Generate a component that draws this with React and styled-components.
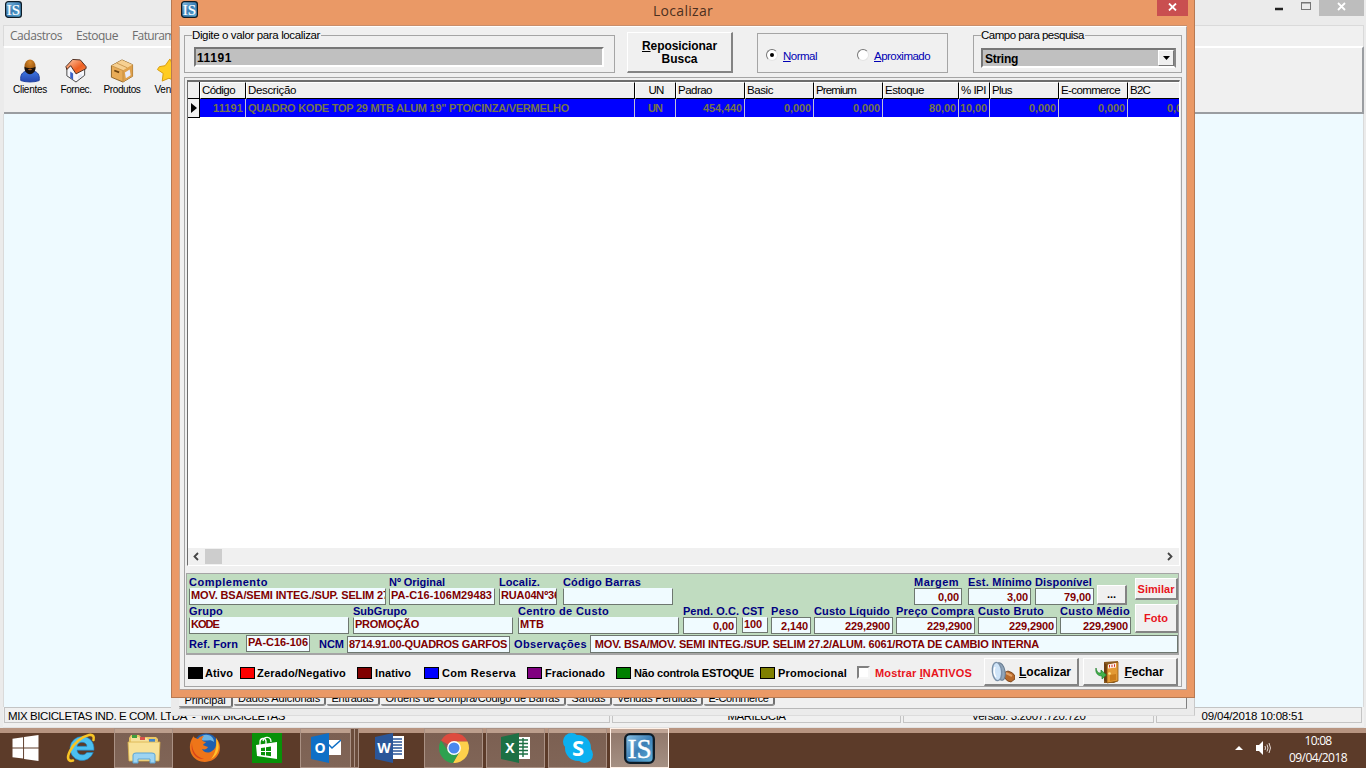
import React, { useLayoutEffect, useRef } from "react";
import styled, { createGlobalStyle } from "styled-components";

const Global = createGlobalStyle`
  * { box-sizing: border-box; }
  body { margin: 0; background: #eaeaea; font-family: "Liberation Sans", Arial, sans-serif; font-size: 11px; color: #000; }
`;

/* ---------- text whose tracking adapts to a given width ---------- */
const TextSpan = styled.span`
  display: inline-block;
  white-space: pre;
  flex: none;
  justify-self: start;
  color: ${(p) => p.$color || "inherit"};
`;
function Text({ w, color, children }) {
  const ref = useRef(null);
  useLayoutEffect(() => {
    const el = ref.current;
    if (!w || !el) return;
    el.style.letterSpacing = "0px";
    const n = el.textContent.length;
    const spacing = (w - el.getBoundingClientRect().width) / n;
    el.style.letterSpacing = spacing.toFixed(3) + "px";
  }, [w]);
  return (
    <TextSpan ref={ref} $color={color}>
      {children}
    </TextSpan>
  );
}

/* ---------- desktop ---------- */
const Desktop = styled.div`
  position: relative;
  width: 1366px;
  height: 768px;
  overflow: hidden;
  display: flex;
  flex-direction: column;
`;
const MainWindow = styled.div`
  height: 728px;
  display: flex;
  flex-direction: column;
  background: #ebebeb;
  padding: 0 2px 0 3px;
`;
const MainTitle = styled.div`
  height: 25px;
  display: flex;
  justify-content: space-between;
  padding-left: 2px;
  & > svg { margin-top: 1px; }
`;
const WindowButtons = styled.div`
  display: flex;
  height: 16px;
`;
const MenuBar = styled.div`
  height: 21px;
  border-top: 1px solid #dadada;
  border-left: 1px solid #dadada;
  border-right: 1px solid #dadada;
  background: #f0f0f0;
  display: flex;
  padding-left: 6px;
  gap: 14px;
  align-items: center;
  font-family: "Open Sans", "Noto Sans", sans-serif;
  font-size: 12px;
  line-height: 18px;
  color: #6d6d6d;
`;
const ToolBar = styled.div`
  height: 68px;
  margin-left: 1px;
  background: #f0f0f0;
  border-top: 2px solid #fff;
  border-right: 2px solid #9a9da1;
  border-bottom: 2px solid #9a9da1;
  display: flex;
  padding: 10px 0 0 3px;
`;
const ToolItem = styled.div`
  width: 46px;
  display: flex;
  flex-direction: column;
  align-items: center;
  flex: none;
  font-size: 10px;
  line-height: 12px;
  gap: 1px;
`;
const Client = styled.div`
  flex: 1;
  background: #eefaff;
  border-left: 1px solid #dadada;
  border-right: 1px solid #dadada;
`;
const StatusBar = styled.div`
  height: 21px;
  background: #f0f0f0;
  display: flex;
  padding: 0 1px 4px 1px;
  gap: 2px;
  border-bottom: 1px solid #e2e2e2;
`;
const StatusCell = styled.div`
  width: ${(p) => p.$w}px;
  flex: none;
  border: 1px solid #c4c4c4;
  display: flex;
  align-items: center;
  font-size: 11.5px;
  line-height: 14px;
  justify-content: ${(p) => (p.$left ? "flex-start" : "center")};
  padding-left: ${(p) => (p.$left ? 3 : 0)}px;
  padding-right: ${(p) => p.$inset || 0}px;
  padding-top: 1px;
`;

/* ---------- child window strip visible below the dialog ---------- */
const ChildWindow = styled.div`
  position: absolute;
  left: 171px;
  top: 690px;
  width: 1024px;
  height: 26px;
  background: #ebebeb;
  border-right: 1px solid #c9c9c9;
  border-bottom: 1px solid #dcdcdc;
  padding-left: 8px;
  padding-right: 7px;
`;
const ChildFrame = styled.div`
  height: 19px;
  background: #f0f0f0;
  border-right: 1px solid #808080;
  border-bottom: 1px solid #b8b8b8;
  display: flex;
  align-items: flex-start;
`;
const Tab = styled.div`
  width: ${(p) => p.$w}px;
  height: ${(p) => (p.$active ? 18 : 16)}px;
  border-right: 2px solid #6f6f6f;
  border-bottom: 2px solid #8c8c8c;
  border-radius: 0 0 3px 2px;
  display: flex;
  justify-content: center;
  align-items: flex-end;
  line-height: 12px;
  margin-right: 1px;
`;

/* ---------- dialog ---------- */
const Dialog = styled.div`
  position: absolute;
  left: 171px;
  top: 0;
  width: 1024px;
  height: 698px;
  background: #ea9966;
  border-left: 1px solid #b77952;
  border-right: 1px solid #b77952;
  border-bottom: 1px solid #b77952;
  padding: 0 7px 7px;
  display: flex;
  flex-direction: column;
`;
const DialogTitle = styled.div`
  height: 26px;
  flex: none;
  border-bottom: 1px solid #c98e6b;
  display: grid;
  grid-template-columns: 472px 1fr auto;
  font-family: "Open Sans", "Noto Sans", sans-serif;
  font-size: 14px;
  line-height: 21px;
  color: #4c3020;
  padding-left: 2px;
  & > svg { margin-top: 1px; }
`;
const DialogClose = styled.div`
  width: 31px;
  height: 16px;
  margin-right: -1px;
  background: #c94f50;
  display: flex;
  align-items: center;
  justify-content: center;
  padding-bottom: 2px;
`;
const DialogBody = styled.div`
  flex: 1;
  min-height: 0;
  background: #f0f0f0;
  border: 1px solid #b0a098;
  border-top: 1px solid #fff;
  border-left-color: #c9a78f;
  padding: 2px 4px 2px 4px;
  display: flex;
  flex-direction: column;
`;
const SearchRow = styled.div`
  height: 48px;
  flex: none;
  display: flex;
  align-items: flex-start;
`;
const Group = styled.fieldset`
  margin: ${(p) => (p.$plain ? 4 : 0)}px 0 0 ${(p) => p.$gap || 0}px;
  padding: 0 8px 0 9px;
  min-width: 0;
  width: ${(p) => p.$w}px;
  height: ${(p) => (p.$plain ? 40 : 44)}px;
  border: 1px solid #a5a5a5;
  flex: none;
`;
const Legend = styled.legend`
  padding: 0 1px 0 0;
  margin-left: -2px;
  height: 13px;
  line-height: 13px;
  font-size: 11.5px;
`;
const SearchInput = styled.div`
  width: 410px;
  height: 20px;
  margin-top: 5px;
  background: #c0c0c0;
  border: 2px solid;
  border-color: #777 #fff #fff #777;
  font-size: 12px;
  font-weight: 700;
  line-height: 18px;
  padding-left: 1px;
`;
const Combo = styled.div`
  width: 195px;
  height: 20px;
  margin: 6px 0 0 -2px;
  background: #c0c0c0;
  border: 2px solid;
  border-color: #777 #888 #fff #777;
  display: flex;
  justify-content: space-between;
  font-size: 12px;
  font-weight: 700;
  line-height: 18px;
  padding-left: 2px;
`;
const ComboArrow = styled.div`
  width: 16px;
  background: #f0f0f0;
  border: 1px solid;
  border-color: #fff #777 #777 #fff;
  display: flex;
  align-items: center;
  justify-content: center;
`;
const Button = styled.div`
  width: ${(p) => p.$w}px;
  height: ${(p) => p.$h}px;
  margin: ${(p) => p.$top || 0}px 0 0 ${(p) => p.$gap || 0}px;
  flex: none;
  background: #f0f0f0;
  border: solid;
  border-width: 1px 2px 2px 1px;
  border-color: #fff #838383 #838383 #fff;
  display: flex;
  flex-direction: ${(p) => (p.$column ? "column" : "row")};
  align-items: center;
  justify-content: center;
  gap: ${(p) => (p.$column ? 0 : 4)}px;
  font-weight: 700;
  font-size: ${(p) => p.$size || 12}px;
  line-height: 13px;
  padding-top: ${(p) => p.$drop || 0}px;
  color: ${(p) => p.$color || "#000"};
  white-space: nowrap;
`;
const RadioRow = styled.div`
  display: flex;
  align-items: center;
  height: 40px;
  padding-top: 4px;
  color: #0000b4;
  font-size: 11.5px;
`;
const Radio = styled.span`
  width: 12px;
  height: 12px;
  border-radius: 50%;
  margin: -3px 5px 0 ${(p) => p.$gap || -1}px;
  background: #fff;
  border: 1.5px solid;
  border-color: #777 #e4e4e4 #e4e4e4 #777;
  display: flex;
  align-items: center;
  justify-content: center;
  &::after {
    content: "";
    width: 4px;
    height: 4px;
    border-radius: 50%;
    background: ${(p) => (p.$on ? "#000" : "transparent")};
  }
`;
const Panel = styled.div`
  flex: 1;
  min-height: 0;
  border: 1px solid #a5a5a5;
  padding: 2px 1px 0 1px;
  display: flex;
  flex-direction: column;
`;

/* ---------- grid ---------- */
const Grid = styled.div`
  height: 486px;
  flex: none;
  background: #fff;
  border-top: 2px solid #6c6c6c;
  border-left: 1px solid #6c6c6c;
  border-right: 1px solid #fff;
  border-bottom: 1px solid #fff;
  margin-left: 1px;
  display: flex;
  flex-direction: column;
  overflow: hidden;
`;
const GridRow = styled.div`
  display: flex;
  flex: none;
  overflow: hidden;
  height: ${(p) => (p.$head ? 17 : 19)}px;
`;
const HeadCell = styled.div`
  width: ${(p) => p.$w}px;
  flex: none;
  background: #f0f0f0;
  border-right: 1px solid #000;
  border-bottom: 1px solid #000;
  border-top: 1px solid #fff;
  border-left: 1px solid #fff;
  padding-left: 1px;
  font-size: 11.5px;
  line-height: 14px;
  text-align: ${(p) => p.$align || "left"};
  white-space: nowrap;
`;
const DataCell = styled.div`
  width: ${(p) => p.$w}px;
  flex: none;
  height: 18px;
  background: #0000ff;
  border-right: 1px solid #c0c0d8;
  color: #74744c;
  font-weight: 700;
  line-height: 17px;
  padding: 1px 2px 0 2px;
  display: flex;
  justify-content: ${(p) => p.$justify || "flex-end"};
`;
const Indicator = styled.div`
  width: 12px;
  flex: none;
  background: #f0f0f0;
  border-right: 1px solid #000;
  border-bottom: 1px solid #000;
  display: flex;
  align-items: center;
  justify-content: center;
`;
const GridSpace = styled.div`
  flex: 1;
`;
const ScrollBar = styled.div`
  height: 17px;
  background: #f0f0f0;
  display: flex;
  align-items: center;
  padding: 0 4px 1px 3px;
`;
const Thumb = styled.div`
  width: 17px;
  height: 15px;
  background: #cdcdcd;
  margin-left: 3px;
  margin-right: auto;
`;

/* ---------- product details ---------- */
const Details = styled.div`
  height: 82px;
  flex: none;
  margin: 7px 1px 0 0;
  background: #c0dcc0;
  border: solid #a5a5a5;
  border-width: 1px 1px 2px 1px;
  padding: 2px 0 0 2px;
`;
const DetailTop = styled.div`
  display: flex;
  height: 59px;
`;
const DetailRows = styled.div`
  width: 946px;
  flex: none;
`;
const DetailRow = styled.div`
  display: flex;
  height: ${(p) => p.$h}px;
  align-items: flex-start;
`;
const FieldBlock = styled.div`
  width: ${(p) => p.$w}px;
  margin-left: ${(p) => p.$gap || 0}px;
  flex: none;
  color: #000080;
  font-weight: 700;
  line-height: 13px;
`;
const FieldLabel = styled.div`
  height: 12px;
  white-space: nowrap;
`;
const FieldBox = styled.div`
  height: ${(p) => p.$h || 17}px;
  width: ${(p) => (p.$w ? p.$w + "px" : "auto")};
  margin-left: ${(p) => p.$gap || 0}px;
  margin-top: ${(p) => p.$top || 0}px;
  flex: none;
  background: #f0fbff;
  border: 1px solid #6e7770;
  border-top-color: ${(p) => (p.$flat ? "#f0fbff" : "#6e7770")};
  color: #800000;
  font-weight: 700;
  line-height: 13px;
  padding: ${(p) => (p.$right ? "2px 2px 0 0" : (p.$drop || 0) + "px 0 0 1px")};
  display: flex;
  justify-content: ${(p) => (p.$right ? "flex-end" : "flex-start")};
  overflow: hidden;
`;
const InlineLabel = styled.div`
  margin: 3px 0 0 ${(p) => p.$gap || 0}px;
  color: #000080;
  font-weight: 700;
  line-height: 13px;
`;
const SideButtons = styled.div`
  width: 42px;
  padding-top: 2px;
`;

/* ---------- footer ---------- */
const Footer = styled.div`
  flex: 1;
  display: flex;
  align-items: center;
  padding-left: 2px;
  padding-top: 3px;
  font-weight: 700;
`;
const Swatch = styled.span`
  width: 15px;
  height: 12px;
  border: 1px solid #000;
  flex: none;
  background: ${(p) => p.$color};
  margin-left: ${(p) => p.$gap || 0}px;
  margin-right: ${(p) => p.$after || 2}px;
  margin-top: 1px;
`;
const LegendText = styled.span`
  padding-top: 1px;
`;
const CheckBox = styled.span`
  width: 13px;
  height: 13px;
  background: #fff;
  border: 2px solid;
  border-color: #808080 #f6f6f6 #f6f6f6 #808080;
  margin: 0 5px 0 10px;
  flex: none;
`;

/* ---------- taskbar ---------- */
const TaskBar = styled.div`
  height: 40px;
  background: linear-gradient(#b79480 0, #b79480 5px, #5c3b29 5px, #5c3b29 100%);
  display: flex;
`;
const TaskItem = styled.div`
  width: ${(p) => p.$w}px;
  margin-left: ${(p) => p.$gap || 0}px;
  flex: none;
  height: 40px;
  display: flex;
  align-items: center;
  justify-content: center;
  border: ${(p) => (p.$open || p.$active ? "1px solid" : "0")};
  border-color: ${(p) => (p.$active ? "#fff0e6" : "#aa9184")};
  background: ${(p) =>
    p.$active ? "linear-gradient(#c0a596 4px, #91786b 4px, #a59083)" : p.$open ? "linear-gradient(#bd9f8d 4px, #7c6052 4px, #806557)" : "transparent"};
`;
const StackEdge = styled.div`
  width: 4px;
  height: 40px;
  border: 1px solid #aa9184;
  border-left: 0;
  background: #6b4c3b;
`;
const Tray = styled.div`
  margin-left: auto;
  display: flex;
  align-items: center;
  color: #fff;
  padding-right: 18px;
`;
const Clock = styled.div`
  margin-left: 17px;
  width: 60px;
  text-align: center;
  font-family: "Open Sans", "Noto Sans", sans-serif;
  font-size: 12px;
  line-height: 17px;
  padding-top: 1px;
`;

/* ---------- drawings ---------- */
const ISIcon = ({ s }) => (
  <svg width={s} height={s} viewBox="0 0 32 32">
    <defs>
      <linearGradient id="isg" x1="0" y1="0" x2="1" y2="1">
        <stop offset="0" stopColor="#8cc4e8" />
        <stop offset=".5" stopColor="#3c7fb6" />
        <stop offset="1" stopColor="#5fb2da" />
      </linearGradient>
    </defs>
    <rect x="1.2" y="1.2" width="29.6" height="29.6" rx="5" fill="url(#isg)" stroke="#0d1b26" strokeWidth="2.4" />
    <text x="16" y="26" textAnchor="middle" fontFamily="Liberation Serif, serif" fontSize="29" fill="#fff" stroke="#fff" strokeWidth=".4" textLength="25" lengthAdjust="spacingAndGlyphs">IS</text>
  </svg>
);
const Cross = () => (
  <svg width="9" height="8" viewBox="0 0 9 8"><path d="M1 .5l7 7M8 .5l-7 7" stroke="#fff" strokeWidth="1.8" /></svg>
);
const Person = () => (
  <svg width="22" height="25" viewBox="0 0 24 26">
    <defs>
      <radialGradient id="face" cx=".5" cy=".2" r=".7"><stop offset="0" stopColor="#d98a2c" /><stop offset="1" stopColor="#8c4a08" /></radialGradient>
      <linearGradient id="shirt" x1="0" y1="0" x2="0" y2="1"><stop offset="0" stopColor="#3d76e0" /><stop offset="1" stopColor="#2546ae" /></linearGradient>
    </defs>
    <path d="M2 24c-1-6 2-10 6-10h8c4 0 7 4 6 10-5 2-15 2-20 0z" fill="url(#shirt)" stroke="#183a9c" />
    <ellipse cx="12" cy="8.500" rx="6" ry="7.5" fill="url(#face)" />
    <path d="M6 9c2 2 10 2 12 0 .5 4-2 8-6 8s-6.500-4-6-8z" fill="#17100c" />
    <ellipse cx="12" cy="12" rx="2.200" ry=".8" fill="#a05a2a" />
  </svg>
);
const House = () => (
  <svg width="24" height="25" viewBox="0 0 24 26">
    <defs>
      <linearGradient id="roof" x1="0" y1="0" x2="1" y2="1"><stop offset="0" stopColor="#ffd0ae" /><stop offset=".6" stopColor="#ee5f22" /><stop offset="1" stopColor="#f58a50" /></linearGradient>
    </defs>
    <path d="M2.500 10v8.500l9.500 6.500 9-7V10L12 5z" fill="#f7f7fb" stroke="#444" strokeLinejoin="round" />
    <path d="M1.500 9L8.500 1.500l8 .5L22.500 9v2L12 16.500 6.500 8l-4 4z" fill="url(#roof)" stroke="#4c2a1c" strokeLinejoin="round" />
    <path d="M6 14l3 2v6.500l-3-2z" fill="#3a62c8" />
    <path d="M14 18.500l4-2v3l-4 2z" fill="#dfe6f4" />
  </svg>
);
const Box = () => (
  <svg width="24" height="25" viewBox="0 0 24 26">
    <path d="M1 8l11-6 11 5v12l-10 6L1 20z" fill="#e8ac58" stroke="#8e6428" />
    <path d="M1 8l11-6 11 5-10 6z" fill="#f6d092" />
    <path d="M13 13l10-6v12l-10 6z" fill="#dfa14c" />
    <path d="M6.500 5.200l11 5M1 8l12 5v12" stroke="#c08a40" fill="none" strokeWidth=".8" />
    <path d="M4 13l5 2" stroke="#6f4510" strokeWidth="1.800" />
    <path d="M15 15l5-3 1 6-5 3z" fill="#e9edfc" />
  </svg>
);
const Star = () => (
  <svg width="26" height="25" viewBox="0 0 26 26">
    <path d="M15 1l3 7 8 2-6 6 0 8-6-3-7 3 1-8-6-4 2-3 6-1z" fill="#ffcc22" stroke="#d79a0b" strokeLinejoin="round" />
  </svg>
);
const Magnifier = () => (
  <svg width="24" height="22" viewBox="0 0 24 22">
    <path d="M12 12l5-2q5 1 7 5v3l-4 3q-4 0-7-5z" fill="#b8692a" stroke="#6f3c14" strokeWidth=".8" strokeLinejoin="round" />
    <path d="M15 12l6 3" stroke="#e3a267" strokeWidth="2" />
    <ellipse cx="9.500" cy="10.500" rx="4.500" ry="9" transform="rotate(-12 9.500 10.500)" fill="#92a6ba" stroke="#667b90" />
    <ellipse cx="6" cy="10.500" rx="4.600" ry="9.200" transform="rotate(-6 6 10.500)" fill="#cfe4f8" stroke="#7a90a8" strokeWidth="1.400" />
    <path d="M4 6c-1.500 3-1 8 1 10" stroke="#fff" strokeWidth="1.500" fill="none" />
  </svg>
);
const Door = () => (
  <svg width="24" height="24" viewBox="0 0 24 24" overflow="visible">
    <path d="M7 2l14-1v20l-4 2H7z" fill="#8a5a20" />
    <path d="M7 3l3 2v18l-3-3z" fill="#6b3d10" />
    <path d="M10 5l11-3v19l-11 2z" fill="#e39a35" stroke="#8d5817" strokeWidth=".8" />
    <path d="M11 4.500l8-1.500v4.500l-8 1z" fill="#fff3ee" />
    <path d="M12.500 5v2.500M15 4.700v2.500M17.500 4.300v2.500" stroke="#cf2e20" />
    <path d="M13 15l6-1v6l-6 1z" fill="#cb7d1c" />
    <circle cx="12.500" cy="13.500" r="1.300" fill="#ffe78c" />
    <path d="M-1 8c1 5 3 5 5 5v-3l5.500 5L5 19v-3c-4 0-7-3-6-8z" fill="#43b34c" stroke="#1e7d2a" strokeWidth=".7" />
  </svg>
);
const WindowsLogo = () => (
  <svg width="27" height="26" viewBox="0 0 27 27"><path d="M0 4l11-1.600V13H0zM12 2.200L27 0v13H12zM0 14h11v10.500L0 23zM12 14h15v13l-15-2.200z" fill="#fff" /></svg>
);
const IE = () => (
  <svg width="32" height="32" viewBox="0 0 32 32">
    <path d="M17 4.500a12 12 0 1 0 11.300 16h-6.500c-1 1.600-2.700 2.300-4.600 2.300-3 0-5-2-5.200-4.600h17C29.500 10 24.500 4.500 17 4.500zm-5 9.800c.4-2.300 2.400-4 5-4 2.700 0 4.800 1.600 5 4z" fill="#4cc0f0" stroke="#1b83c4" strokeWidth=".6" />
    <path d="M8 28.500C3 30 1.500 26 5 19 9 11 17 4.500 24 3c4-.8 5.500 1.500 4.500 5" fill="none" stroke="#f8c425" strokeWidth="2.600" strokeLinecap="round" />
  </svg>
);
const Folder = () => (
  <svg width="34" height="32" viewBox="0 0 34 32">
    <path d="M2 6l2-3h8l2 2h15l2 2v20H2z" fill="#e9c765" />
    <path d="M4 5h8l2 3h7v3H4zM14 6h6l2 3h8v3H14z" fill="#f7e5a4" opacity=".85" />
    <path d="M5 3h5v3H5z" fill="#3f9f3d" /><path d="M13 5h5v3h-5z" fill="#d9534a" /><path d="M22 7h6v3h-6z" fill="#4186cf" />
    <path d="M1 10h32l-1 19H2z" fill="#f8e298" stroke="#d8b14a" strokeWidth=".8" />
    <path d="M6 31v-8q0-2 3-2h16q3 0 3 2v8h-5v-4H11v4z" fill="#9dd4f2" stroke="#5ba5d6" />
  </svg>
);
const Firefox = () => (
  <svg width="32" height="32" viewBox="0 0 32 32">
    <circle cx="17" cy="14" r="12.500" fill="#1f5fae" />
    <path d="M13 4c5-3 12 0 12 6-4-4-8 0-12-2z" fill="#6cb4e4" />
    <path d="M4 5C0 11 0 18 3 23c6 10 22 9 27-2 2-5 1-11-3-15 1 6 0 11-4 13-4 3-9 1-10-2 3 1 5 0 6-2-2-1-4-1-5-2 1-2 3-2 3-3-2 0-3-1-4-2 0-2 1-3 2-4-3 0-5 1-6 3-2-1-5-1-5-4z" fill="#ee7519" />
    <path d="M27 6c5 7 3 17-5 21 5-6 6-13 5-21z" fill="#ffc22c" />
    <path d="M3 11c0 8 4 14 12 16-8 1-14-7-12-16z" fill="#d9441a" />
  </svg>
);
const Store = () => (
  <svg width="30" height="30" viewBox="0 0 30 30">
    <rect width="30" height="30" fill="#089108" />
    <path d="M4 12l21-3v17L5 23z" fill="#fff" />
    <path d="M8 12V9c0-4 5-5 6-1v3M11 8c1-5 8-5 8 1" fill="none" stroke="#fff" strokeWidth="1.300" />
    <path d="M9 15l4-.6V18H9zM14 14.200l5-.7V18h-5zM9 19h4v3.500L9 22zM14 19h5v4.200l-5-.7z" fill="#089108" />
  </svg>
);
const Office = ({ letter, color, children }) => (
  <svg width="30" height="30" viewBox="0 0 30 30">
    {children}
    <path d="M0 4l18-4v30L0 26z" fill={color} />
    <text x="9" y="20" textAnchor="middle" fontFamily="Open Sans, sans-serif" fontWeight="700" fontSize="14" fill="#fff">{letter}</text>
  </svg>
);
const Chrome = () => (
  <svg width="30" height="30" viewBox="0 0 30 30">
    <path d="M15 15L2 7.500A15 15 0 0 1 28.500 8.500H15z" fill="#dd4b3e" />
    <path d="M15 8.500h13.500A15 15 0 0 1 14 30l7-12z" fill="#fdd04b" />
    <path d="M2 7.500A15 15 0 0 0 14 30l6.500-11.500L9 18z" fill="#2da14f" />
    <circle cx="15" cy="15" r="6.900" fill="#fff" /><circle cx="15" cy="15" r="5.500" fill="#4a88ee" />
  </svg>
);
const Skype = () => (
  <svg width="30" height="30" viewBox="0 0 30 30">
    <circle cx="15" cy="15" r="13" fill="#0bb0f0" /><circle cx="8.500" cy="8.500" r="8.500" fill="#0bb0f0" /><circle cx="21.500" cy="21.500" r="8.500" fill="#0bb0f0" />
    <text x="15" y="22.500" textAnchor="middle" fontFamily="Open Sans, sans-serif" fontWeight="700" fontSize="22" fill="#fff">S</text>
  </svg>
);
const Speaker = () => (
  <svg width="15" height="14" viewBox="0 0 15 14">
    <path d="M0 4h3l4-4v14l-4-4H0z" fill="#fff" />
    <path d="M9 5q1 2 0 4M11 3.500q2 3.500 0 7M13 2q3 5 0 10" stroke="#e4d9d3" fill="none" />
  </svg>
);

/* ---------- data ---------- */
const columns = [
  ["Código", 46, 33, "11191", 30],
  ["Descrição", 389, 48, "QUADRO KODE TOP 29 MTB ALUM 19\" PTO/CINZA/VERMELHO", 321, "flex-start"],
  ["UN", 41, 15, "UN", 14, "center"],
  ["Padrao", 69, 34, "454,440", 39],
  ["Basic", 69, 26, "0,000", 27],
  ["Premium", 69, 40, "0,000", 27],
  ["Estoque", 76, 39, "80,00", 27],
  ["% IPI", 31, 25, "10,00", 27],
  ["Plus", 69, 20, "0,000", 27],
  ["E-commerce", 69, 59, "0,000", 27],
  ["B2C", 69, 20, "0,000", 27],
];
const tabs = [
  ["Principal", 54, 41, true],
  ["Dados Adicionais", 92, 82],
  ["Entradas", 53, 42],
  ["Ordens de Compra/Código de Barras", 185, 174],
  ["Saídas", 45, 34],
  ["Vendas Perdidas", 90, 80],
  ["E-Commerce", 71, 60],
];
const legend = [
  ["#000", 0, 2, "Ativo", 28],
  ["#f00", 7, 2, "Zerado/Negativo", 89],
  ["#800000", 11, 3, "Inativo", 36],
  ["#00f", 13, 3, "Com Reserva", 74],
  ["#800080", 11, 3, "Fracionado", 60],
  ["#008000", 11, 3, "Não controla ESTOQUE", 120],
  ["#808000", 6, 3, "Promocional", 69],
];
const firstFields = [
  ["Complemento", 79, 197, 0, "MOV. BSA/SEMI INTEG./SUP. SELIM 27.2", 207],
  ["Nº Original", 56, 106, 3, "PA-C16-106M29483", 101],
  ["Localiz.", 41, 58, 4, "RUA04Nº36", 59],
  ["Código Barras", 78, 110, 6, "", 0],
  ["Margem", 45, 48, 241, "0,00", 21, true],
  ["Est. Mínimo", 64, 63, 6, "3,00", 21, true],
  ["Disponível", 57, 59, 4, "79,00", 27, true],
];
const secondFields = [
  ["Grupo", 34, 160, 0, "KODE", 28],
  ["SubGrupo", 54, 160, 4, "PROMOÇÃO", 64],
  ["Centro de Custo", 91, 161, 5, "MTB", 24],
  ["Pend. O.C.", 56, 54, 4, "0,00", 21, true],
  ["CST", 22, 26, 5, "100", 18],
  ["Peso", 28, 40, 3, "2,140", 27, true],
  ["Custo Líquido", 76, 79, 3, "229,2900", 45, true],
  ["Preço Compra", 78, 79, 3, "229,2900", 45, true],
  ["Custo Bruto", 66, 79, 3, "229,2900", 45, true],
  ["Custo Médio", 70, 71, 3, "229,2900", 45, true],
];

function Field({ spec }) {
  const [label, lw, w, gap, value, vw, right] = spec;
  return (
    <FieldBlock $w={w} $gap={gap}>
      <FieldLabel><Text w={lw}>{label}</Text></FieldLabel>
      <FieldBox $right={right} $flat={!right} $h={label === "CST" ? 16 : 17}>{value && <Text w={vw}>{value}</Text>}</FieldBox>
    </FieldBlock>
  );
}

export default function App() {
  return (
    <Desktop>
      <Global />
      <MainWindow>
        <MainTitle>
          <ISIcon s={17} />
          <WindowButtons>
            <svg width="45" height="16"><path d="M1 9h8" stroke="#222" strokeWidth="2.500" /><rect x="27.500" y="2.500" width="9" height="7" fill="none" stroke="#777" /><path d="M27 3h10" stroke="#777" /></svg>
            <svg width="45" height="16"><rect width="45" height="16" fill="#bdbdbd" /><path d="M19 3l7 7M26 3l-7 7" stroke="#fff" strokeWidth="1.800" /></svg>
          </WindowButtons>
        </MainTitle>
        <MenuBar>
          <Text w={52}>Cadastros</Text>
          <Text w={42}>Estoque</Text>
          <Text w={66}>Faturamento</Text>
        </MenuBar>
        <ToolBar>
          <ToolItem><Person /><Text w={34}>Clientes</Text></ToolItem>
          <ToolItem><House /><Text w={31}>Fornec.</Text></ToolItem>
          <ToolItem><Box /><Text w={37}>Produtos</Text></ToolItem>
          <ToolItem><Star /><Text w={27}>Venda</Text></ToolItem>
        </ToolBar>
        <Client />
        <StatusBar>
          <StatusCell $w={606} $left><Text w={277}>{"MIX BICICLETAS IND. E COM. LTDA  -  MIX BICICLETAS"}</Text></StatusCell>
          <StatusCell $w={289}><Text w={58}>MARILUCIA</Text></StatusCell>
          <StatusCell $w={251}><Text w={114}>Versão: 3.2007.720.720</Text></StatusCell>
          <StatusCell $w={206} $inset={13}><Text w={102}>09/04/2018 10:08:51</Text></StatusCell>
        </StatusBar>
      </MainWindow>

      <ChildWindow>
        <ChildFrame>
          {tabs.map(([t, w, tw, active]) => (
            <Tab key={t} $w={w} $active={active}><Text w={tw}>{t}</Text></Tab>
          ))}
        </ChildFrame>
      </ChildWindow>

      <Dialog>
        <DialogTitle>
          <ISIcon s={17} />
          <Text w={60}>Localizar</Text>
          <DialogClose><Cross /></DialogClose>
        </DialogTitle>
        <DialogBody>
          <SearchRow>
            <Group $w={431}>
              <Legend><Text w={128}>Digite o valor para localizar</Text></Legend>
              <SearchInput><Text w={35}>11191</Text></SearchInput>
            </Group>
            <Button $w={106} $h={41} $gap={12} $top={3} $drop={1} $column>
              <Text w={75}><u>R</u>eposicionar</Text>
              <Text w={36}>Busca</Text>
            </Button>
            <Group $w={191} $gap={24} $plain>
              <RadioRow>
                <Radio $on /><Text w={34}><u>N</u>ormal</Text>
                <Radio $gap={40} /><Text w={56}><u>A</u>proximado</Text>
              </RadioRow>
            </Group>
            <Group $w={209} $gap={25}>
              <Legend><Text w={103}>Campo para pesquisa</Text></Legend>
              <Combo>
                <Text w={33}>String</Text>
                <ComboArrow><svg width="7" height="4"><path d="M0 0h7L3.500 4z" /></svg></ComboArrow>
              </Combo>
            </Group>
          </SearchRow>
          <Panel>
            <Grid>
              <GridRow $head>
                <Indicator />
                {columns.map(([h, w, hw]) => (
                  <HeadCell key={h} $w={w} $align={h === "UN" ? "center" : "left"}><Text w={hw}>{h}</Text></HeadCell>
                ))}
              </GridRow>
              <GridRow>
                <Indicator><svg width="6" height="10"><path d="M0 0l6 5-6 5z" /></svg></Indicator>
                {columns.map(([h, w, , v, vw, j]) => (
                  <DataCell key={h} $w={w} $justify={j}><Text w={vw}>{v}</Text></DataCell>
                ))}
              </GridRow>
              <GridSpace />
              <ScrollBar>
                <svg width="11" height="9"><path d="M7 1L3.500 4.500 7 8" stroke="#444" strokeWidth="1.800" fill="none" /></svg>
                <Thumb />
                <svg width="9" height="9"><path d="M2 1l3.500 3.500L2 8" stroke="#444" strokeWidth="1.800" fill="none" /></svg>
              </ScrollBar>
            </Grid>
            <Details>
              <DetailTop>
                <DetailRows>
                  <DetailRow $h={29}>
                    {firstFields.map((f) => <Field key={f[0]} spec={f} />)}
                    <Button $w={30} $h={20} $gap={3} $top={9} $size={11}>...</Button>
                  </DetailRow>
                  <DetailRow $h={30}>
                    {secondFields.map((f) => <Field key={f[0]} spec={f} />)}
                  </DetailRow>
                </DetailRows>
                <SideButtons>
                  <Button $w={43} $h={22} $drop={1} $color="#e8141c" $size={11}><Text w={37}>Similar</Text></Button>
                  <Button $w={43} $h={29} $top={4} $drop={1} $color="#e8141c" $size={11}><Text w={24}>Foto</Text></Button>
                </SideButtons>
              </DetailTop>
              <DetailRow $h={19}>
                <InlineLabel><Text w={49}>Ref. Forn</Text></InlineLabel>
                <FieldBox $w={64} $h={17} $gap={8}><Text w={60}>PA-C16-106</Text></FieldBox>
                <InlineLabel $gap={9}><Text w={25}>NCM</Text></InlineLabel>
                <FieldBox $w={163} $gap={3} $h={17} $top={1} $drop={1}><Text w={158}>8714.91.00-QUADROS GARFOS</Text></FieldBox>
                <InlineLabel $gap={4}><Text w={73}>Observações</Text></InlineLabel>
                <FieldBox $w={588} $gap={3} $h={18} $drop={2}><Text w={447}>{" MOV. BSA/MOV. SEMI INTEG./SUP. SELIM 27.2/ALUM. 6061/ROTA DE CAMBIO INTERNA"}</Text></FieldBox>
              </DetailRow>
            </Details>
            <Footer>
              {legend.map(([c, g, a, t, w]) => (
                <React.Fragment key={t}>
                  <Swatch $color={c} $gap={g} $after={a} />
                  <LegendText><Text w={w}>{t}</Text></LegendText>
                </React.Fragment>
              ))}
              <CheckBox />
              <LegendText><Text w={97} color="#e8141c">Mostrar <u>I</u>NATIVOS</Text></LegendText>
              <Button $w={95} $h={28} $gap={12} $drop={1}><Magnifier /><Text w={52}><u>L</u>ocalizar</Text></Button>
              <Button $w={95} $h={28} $gap={4} $drop={1}><Door /><Text w={39}><u>F</u>echar</Text></Button>
            </Footer>
          </Panel>
        </DialogBody>
      </Dialog>

      <TaskBar>
        <TaskItem $w={50}><WindowsLogo /></TaskItem>
        <TaskItem $w={62}><IE /></TaskItem>
        <TaskItem $w={59} $gap={2} $open><Folder /></TaskItem>
        <TaskItem $w={62} $gap={1}><Firefox /></TaskItem>
        <TaskItem $w={62}><Store /></TaskItem>
        <TaskItem $w={51} $gap={2} $open>
          <Office letter="O" color="#0f6fc6"><path d="M12 7h18v15H12z" fill="#fff" /><path d="M15 9l6 6 9-8" stroke="#0f6fc6" strokeWidth="1.600" fill="none" /></Office>
        </TaskItem>
        <StackEdge /><StackEdge />
        <TaskItem $w={62}>
          <Office letter="W" color="#2a5699"><path d="M14 3h15v23H14z" fill="#fff" /><path d="M18 6h9M18 9h9M18 12h9M18 15h9M18 18h9M18 21h9" stroke="#2a5699" strokeWidth="1.400" /></Office>
        </TaskItem>
        <TaskItem $w={59} $gap={3} $open><Chrome /></TaskItem>
        <TaskItem $w={59} $gap={3} $open>
          <Office letter="X" color="#1d7044"><path d="M14 4h15v22H14z" fill="#fff" /><path d="M18 7h9M18 10.500h9M18 14h9M18 17.500h9M18 21h9M22 5v19" stroke="#1d7044" strokeWidth="1.400" /></Office>
        </TaskItem>
        <TaskItem $w={59} $gap={3} $open><Skype /></TaskItem>
        <TaskItem $w={59} $gap={3} $active><ISIcon s={31} /></TaskItem>
        <Tray>
          <svg width="8" height="4"><path d="M4 0l4 4H0z" fill="#fff" /></svg>
          <svg width="13" height="4" />
          <Speaker />
          <Clock><Text w={27}>10:08</Text><Text w={58}>09/04/2018</Text></Clock>
        </Tray>
      </TaskBar>
    </Desktop>
  );
}
